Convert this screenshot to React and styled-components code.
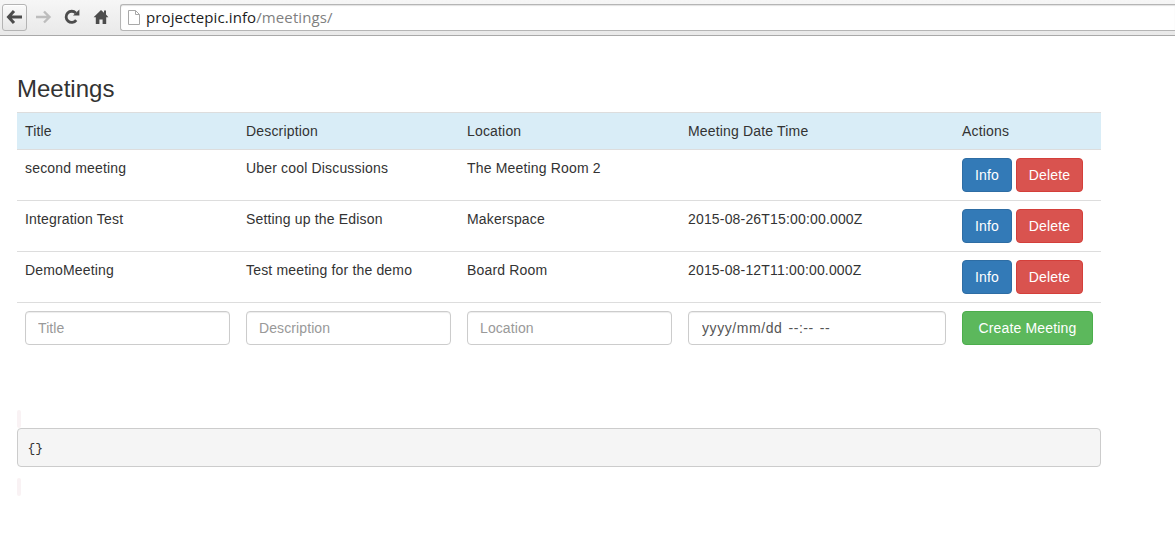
import React from "react";
import styled, { createGlobalStyle } from "styled-components";

const Global = createGlobalStyle`
  html, body { margin: 0; padding: 0; background: #fff; }
  body { font-family: "Liberation Sans", Arial, sans-serif; font-size: 14px; line-height: 20px; color: #333; }
  * { box-sizing: border-box; }
`;

const Chrome = styled.header`
  height: 36px; display: flex; align-items: center; padding: 0 0 1px 2px;
  background: linear-gradient(#f6f6f6, #e9e9e9);
  border-bottom: 1px solid #a9a9a9;
`;
const NavButton = styled.div`
  width: ${p => p.$w}px; height: 27px; display: flex; align-items: center; justify-content: center; flex: none;
  border-radius: 3px;
  ${p => p.$boxed ? "border: 1px solid #b4b4b4; background: linear-gradient(#fafafa, #e6e6e6); box-shadow: 0 1px 0 #fff inset;" : ""}
`;
const AddressBar = styled.div`
  flex: 1; height: 27px; margin-left: 4px; display: flex; align-items: center; gap: 6px; padding-left: 7px;
  background: #fff; border: 1px solid #b5b5b5; border-right: none; border-radius: 3px 0 0 3px;
  box-shadow: 0 1px 1px rgba(0,0,0,.12) inset;
  font-family: "Open Sans", sans-serif; font-size: 15px; color: #1c1c1c; letter-spacing: 0.1px;
`;
const UrlPath = styled.span`color: #7f7f7f;`;

const Page = styled.main`padding: 40px 74px 0 17px;`;
const Heading = styled.h3`margin: 0 0 10px; font-size: 24px; font-weight: 500; line-height: 26px; color: #333;`;

const Table = styled.table`width: 1084px; border-collapse: collapse; table-layout: fixed; letter-spacing: 0.17px;`;
const HeadRow = styled.tr`background: #d9edf7;`;
const Th = styled.th`
  width: ${p => p.$w}px; padding: 7px 8px 8px; height: 37px; text-align: left; font-weight: 400; line-height: 20px;
  border-top: 1px solid #ddd; border-bottom: 1px solid #ddd;
`;
const Td = styled.td`
  padding: 8px; vertical-align: top; height: 51px; line-height: 20px;
  border-top: 1px solid #ddd;
  white-space: nowrap;
`;
const FormTd = styled(Td)`height: 50px;`;
const Actions = styled.div`display: flex; gap: 4px;`;
const Btn = styled.button`
  width: ${p => p.$w}px; height: 34px; padding: 0; border-radius: 4px; border: 1px solid ${p => p.$bd}; background: ${p => p.$bg};
  color: #fff; font: 14px/20px "Liberation Sans", Arial, sans-serif; letter-spacing: 0.17px; white-space: nowrap;
`;
const Input = styled.input`
  display: block; width: 100%; height: 34px; padding: 6px 12px; background: #fff; color: #555;
  border: 1px solid #ccc; border-radius: 4px; box-shadow: inset 0 1px 1px rgba(0,0,0,.075);
  font: 14px/20px "Liberation Sans", Arial, sans-serif; letter-spacing: 0.1px; outline: none;
  &::placeholder { color: #999; opacity: 1; }
`;
const DateInput = styled(Input)`padding-left: 13px; letter-spacing: 0.58px; word-spacing: -1.5px;`;

const Debug = styled.section`margin-top: 57px; display: flex; flex-direction: column;`;
const EmptyCode = styled.div`width: 4px; height: 18px; background: #f9f2f4; border-radius: 2px;`;
const Pre = styled.pre`
  width: 1084px; height: 39px; margin: 0; padding: 11px 9.5px 8px; background: #f5f5f5; border: 1px solid #ccc; border-radius: 4px;
  font: 13px/18.5px "Liberation Mono", "Courier New", monospace; color: #333;
`;
const AfterGap = styled.div`height: 11px;`;

const Back = () => (
  <svg width="18" height="16" viewBox="0 0 18 16"><path d="M8 2 2.5 8 8 14M3 8h13" fill="none" stroke="#4c4c4c" strokeWidth="3" /></svg>
);
const Forward = () => (
  <svg width="18" height="16" viewBox="0 0 18 16"><path d="M10 2.5 15.5 8 10 13.5M15 8H2" fill="none" stroke="#bdbdbd" strokeWidth="2.4" /></svg>
);
const Reload = () => (
  <svg width="16" height="16" viewBox="0 0 16 16"><path d="M12.2 11.2A5.6 5.6 0 1 1 11.8 4" fill="none" stroke="#4c4c4c" strokeWidth="2.8" /><path d="M9 6.6h6.4V.4z" fill="#4c4c4c" /></svg>
);
const Home = () => (
  <svg width="16" height="16" viewBox="0 0 16 16"><path d="M8 1 .6 8.2h2.2V15h3.6v-4.6h3.2V15h3.6V8.2h2.2L13 5.6V1.4h-2v2.4z" fill="#4c4c4c" /></svg>
);
const FileIcon = () => (
  <svg width="12" height="15" viewBox="0 0 12 15"><path d="M.5.5h7l4 4v10H.5zM7.5.5v4h4" fill="#fff" stroke="#a8a8a8" /></svg>
);

const rows = [
  ["second meeting", "Uber cool Discussions", "The Meeting Room 2", ""],
  ["Integration Test", "Setting up the Edison", "Makerspace", "2015-08-26T15:00:00.000Z"],
  ["DemoMeeting", "Test meeting for the demo", "Board Room", "2015-08-12T11:00:00.000Z"],
];

export default function App() {
  return (
    <>
      <Global />
      <Chrome>
        <NavButton $w={25} $boxed><Back /></NavButton>
        <NavButton $w={32}><Forward /></NavButton>
        <NavButton $w={26}><Reload /></NavButton>
        <NavButton $w={31}><Home /></NavButton>
        <AddressBar>
          <FileIcon />
          <span>projectepic.info<UrlPath>/meetings/</UrlPath></span>
        </AddressBar>
      </Chrome>
      <Page>
        <Heading>Meetings</Heading>
        <Table>
          <thead>
            <HeadRow>
              <Th $w={221}>Title</Th>
              <Th $w={221}>Description</Th>
              <Th $w={221}>Location</Th>
              <Th $w={274}>Meeting Date Time</Th>
              <Th $w={147}>Actions</Th>
            </HeadRow>
          </thead>
          <tbody>
            {rows.map(r => (
              <tr key={r[0]}>
                {r.map((c, i) => <Td key={i}>{c}</Td>)}
                <Td>
                  <Actions>
                    <Btn $w={50} $bg="#337ab7" $bd="#2e6da4">Info</Btn>
                    <Btn $w={67} $bg="#d9534f" $bd="#d43f3a">Delete</Btn>
                  </Actions>
                </Td>
              </tr>
            ))}
            <tr>
              <FormTd><Input placeholder="Title" /></FormTd>
              <FormTd><Input placeholder="Description" /></FormTd>
              <FormTd><Input placeholder="Location" /></FormTd>
              <FormTd><DateInput readOnly value="yyyy/mm/dd  --:--  --" /></FormTd>
              <FormTd><Btn $w={131} $bg="#5cb85c" $bd="#4cae4c">Create Meeting</Btn></FormTd>
            </tr>
          </tbody>
        </Table>
        <Debug>
          <EmptyCode />
          <Pre>{"{}"}</Pre>
          <AfterGap />
          <EmptyCode />
        </Debug>
      </Page>
    </>
  );
}
